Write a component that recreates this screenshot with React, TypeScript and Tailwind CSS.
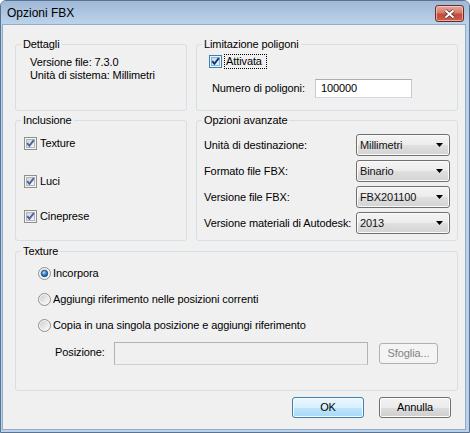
import React from "react";

function CheckBox({ active }: { active?: boolean }) {
  return (
    <svg width="13" height="13" viewBox="0 0 13 13" className="shrink-0">
      <defs>
        <linearGradient id="cbN" x1="0" y1="0" x2="1" y2="1">
          <stop offset="0" stopColor="#cdd1d6" />
          <stop offset="1" stopColor="#f7f7f7" />
        </linearGradient>
        <linearGradient id="cbA" x1="0" y1="0" x2="1" y2="1">
          <stop offset="0" stopColor="#b5dcf7" />
          <stop offset="1" stopColor="#eaf6fd" />
        </linearGradient>
      </defs>
      <rect x="0.5" y="0.5" width="12" height="12" fill="#f4f4f4" stroke={active ? "#3c7fb1" : "#8e8f8f"} />
      <rect x="2.5" y="2.5" width="8" height="8" fill={active ? "url(#cbA)" : "url(#cbN)"} stroke={active ? "#79b9e6" : "#b2b6bb"} />
      <path d="M3.2 6.2 L5.4 8.8 L9.8 3.2" fill="none" stroke={active ? "#1f2f6b" : "#4c61a0"} strokeWidth="1.9" />
    </svg>
  );
}

function Radio({ checked }: { checked?: boolean }) {
  return (
    <svg width="13" height="13" viewBox="0 0 13 13" className="shrink-0">
      <defs>
        <linearGradient id="rbBg" x1="0" y1="0" x2="1" y2="1">
          <stop offset="0" stopColor="#cfcfcf" />
          <stop offset="1" stopColor="#fbfbfb" />
        </linearGradient>
        <radialGradient id="rbDot" cx="0.4" cy="0.35" r="0.7">
          <stop offset="0" stopColor="#b4e6ff" />
          <stop offset="0.5" stopColor="#2c8ad8" />
          <stop offset="1" stopColor="#0d4a8a" />
        </radialGradient>
      </defs>
      <circle cx="6.5" cy="6.5" r="6" fill="#f4f4f4" stroke="#8e8f8f" />
      <circle cx="6.5" cy="6.5" r="4.5" fill="url(#rbBg)" />
      {checked && <circle cx="6.5" cy="6.5" r="3.2" fill="url(#rbDot)" stroke="#1b3d6b" strokeWidth="0.8" />}
    </svg>
  );
}

function Group({ title, className, children }: { title: string; className?: string; children?: React.ReactNode }) {
  return (
    <div className={`relative rounded-[3px] border border-[#d5dfe5] ${className ?? ""}`}>
      <span className="absolute left-[5px] top-[-7px] bg-[#f0f0f0] px-[2px] leading-[13px]">{title}</span>
      {children}
    </div>
  );
}

function Select({ value }: { value: string }) {
  return (
    <div className="flex h-[22px] w-[94px] items-center justify-between rounded-[3px] border border-[#707070] bg-[linear-gradient(#f4f4f4_0%,#ececec_50%,#e0e0e0_50%,#d3d3d3_100%)] pl-[3px] pr-[6px] shadow-[inset_0_0_0_1px_#fbfbfb]">
      <span className="leading-[13px] text-[#111]">{value}</span>
      <svg width="7" height="4" viewBox="0 0 7 4">
        <path d="M0 0 H7 L3.5 4 Z" fill="#000" />
      </svg>
    </div>
  );
}

export default function App() {
  return (
    <div className="flex h-[433px] w-[470px] flex-col overflow-hidden rounded-t-[6px] border border-[#5a7390] bg-[#b9d1ea] font-['Liberation_Sans',Arial,sans-serif] text-[11px] leading-[13px] text-black">
      {/* title bar */}
      <div className="flex h-[24px] shrink-0 items-start bg-[linear-gradient(#9fb8d6,#bdd4ec)]">
        <span className="ml-[6px] mt-[5px] text-[12px] leading-[15px] text-black">Opzioni FBX</span>
        <div className="ml-auto mr-[5px] mt-[4px] flex h-[17px] w-[29px] items-center justify-center rounded-[3px] border border-[#6e2b23] bg-[linear-gradient(#e4a89f_0%,#d77a6c_45%,#c24a38_55%,#c9604c_100%)] shadow-[inset_0_0_0_1px_rgba(255,220,210,0.6)]">
          <svg width="13" height="10" viewBox="0 0 13 10">
            <path d="M2.5 1.5 L10.5 8.5 M10.5 1.5 L2.5 8.5" stroke="#4b3333" strokeWidth="3.6" />
            <path d="M2.5 1.5 L10.5 8.5 M10.5 1.5 L2.5 8.5" stroke="#ffffff" strokeWidth="2" />
          </svg>
        </div>
      </div>

      {/* body frame */}
      <div className="flex flex-1 pb-[3px] pl-[2px] pr-[4px]">
        <div className="flex h-[404px] w-[462px] flex-col bg-[#f0f0f0] pl-[12px] pr-[7px] pt-[19px] tracking-[-0.1px] shadow-[0_0_0_1px_#95acc7]">
          {/* row 1 */}
          <div className="flex h-[67px] gap-[9px]">
            <Group title="Dettagli" className="w-[172px] pl-[14px] pt-[11px]">
              <div>Versione file: 7.3.0</div>
              <div>Unità di sistema: Millimetri</div>
            </Group>
            <Group title="Limitazione poligoni" className="w-[262px] pl-[12px] pt-[9px]">
              <div className="flex h-[15px] items-center">
                <CheckBox active />
                <span className="ml-[2px] flex h-[15px] items-center border border-dotted border-black pl-[1px] pr-[4px]">Attivata</span>
              </div>
              <div className="mt-[10px] flex h-[19px] items-center pl-[3px]">
                <span className="w-[103px]">Numero di poligoni:</span>
                <div className="flex h-[19px] w-[97px] items-center border border-[#abadb3] border-b-[#d5d8de] border-l-[#c5c8ce] border-r-[#c5c8ce] bg-white pl-[5px]">
                  100000
                </div>
              </div>
            </Group>
          </div>

          {/* row 2 */}
          <div className="mt-[9px] flex h-[121px] gap-[9px]">
            <Group title="Inclusione" className="flex w-[172px] flex-col pl-[8px] pt-[16px]">
              <div className="flex h-[13px] items-center">
                <CheckBox />
                <span className="ml-[3px]">Texture</span>
              </div>
              <div className="mt-[25px] flex h-[13px] items-center">
                <CheckBox />
                <span className="ml-[3px]">Luci</span>
              </div>
              <div className="mt-[22px] flex h-[13px] items-center">
                <CheckBox />
                <span className="ml-[3px]">Cineprese</span>
              </div>
            </Group>
            <Group title="Opzioni avanzate" className="flex w-[262px] flex-col gap-[4px] pl-[7px] pt-[13px]">
              <div className="flex h-[22px] items-center">
                <span className="w-[152px]">Unità di destinazione:</span>
                <Select value="Millimetri" />
              </div>
              <div className="flex h-[22px] items-center">
                <span className="w-[152px]">Formato file FBX:</span>
                <Select value="Binario" />
              </div>
              <div className="flex h-[22px] items-center">
                <span className="w-[152px]">Versione file FBX:</span>
                <Select value="FBX201100" />
              </div>
              <div className="flex h-[22px] items-center">
                <span className="w-[152px]">Versione materiali di Autodesk:</span>
                <Select value="2013" />
              </div>
            </Group>
          </div>

          {/* row 3 */}
          <Group title="Texture" className="mt-[10px] flex h-[140px] flex-col pl-[22px] pt-[15px]">
            <div className="flex h-[13px] items-center">
              <Radio checked />
              <span className="ml-[2px]">Incorpora</span>
            </div>
            <div className="mt-[13px] flex h-[13px] items-center">
              <Radio />
              <span className="ml-[2px]">Aggiungi riferimento nelle posizioni correnti</span>
            </div>
            <div className="mt-[13px] flex h-[13px] items-center">
              <Radio />
              <span className="ml-[2px]">Copia in una singola posizione e aggiungi riferimento</span>
            </div>
            <div className="ml-[17px] mt-[10px] flex items-start">
              <span className="mt-[4px] w-[59px]">Posizione:</span>
              <div className="h-[23px] w-[254px] border border-[#b3b3b3] border-b-[#d0d0d0] bg-[#f0f0f0]" />
              <button className="ml-[11px] mt-[1px] flex h-[21px] w-[59px] items-center justify-center rounded-[3px] border border-[#adb2b5] bg-[#f4f4f4] text-[#838383]">
                Sfoglia...
              </button>
            </div>
          </Group>

          {/* buttons */}
          <div className="mt-[6px] flex h-[21px] justify-end gap-[15px] pr-[7px]">
            <button className="flex h-[21px] w-[72px] items-center justify-center rounded-[3px] border border-[#3c7fb1] bg-[linear-gradient(#eaf6fd_0%,#d9f0fc_50%,#bee6fd_50%,#a7d9f5_100%)] shadow-[inset_0_0_0_1px_#f4fbff]">
              OK
            </button>
            <button className="flex h-[21px] w-[72px] items-center justify-center rounded-[3px] border border-[#707070] bg-[linear-gradient(#f2f2f2_0%,#ebebeb_50%,#dddddd_50%,#cfcfcf_100%)] shadow-[inset_0_0_0_1px_#fcfcfc]">
              Annulla
            </button>
          </div>
        </div>
      </div>
    </div>
  );
}
